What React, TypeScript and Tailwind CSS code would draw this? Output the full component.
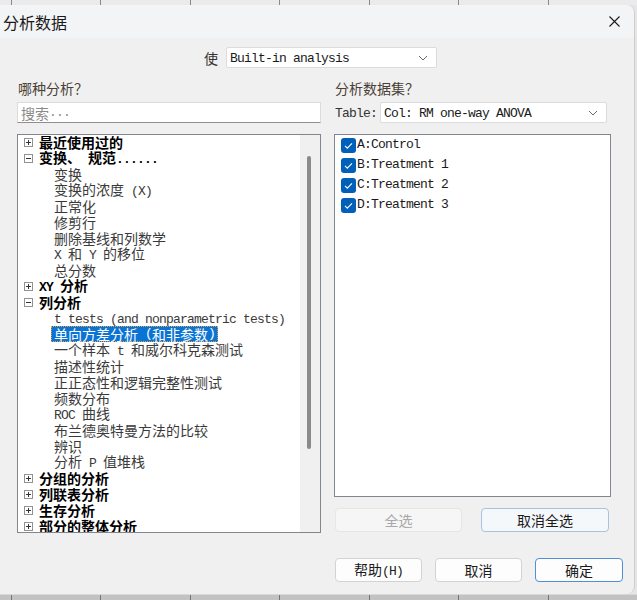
import React from 'react';

// ASCII runs in a narrow mono face, CJK runs in Noto — mimics NSimSun half/full widths
function T({ s }: { s: string }) {
  const parts = s.match(/[\x20-\x7e]+|[^\x20-\x7e]+/g) || [];
  return (
    <>
      {parts.map((p, i) =>
        /^[\x20-\x7e]/.test(p) ? (
          <span key={i} className="font-['Liberation_Mono'] text-[13px] tracking-[-0.8px]">{p}</span>
        ) : (
          <span key={i}>{p}</span>
        )
      )}
    </>
  );
}

function Chevron() {
  return (
    <svg width="10" height="6" viewBox="0 0 10 6" fill="none">
      <path d="M1 1l4 4 4-4" stroke="#6a6a6a" strokeWidth="1" />
    </svg>
  );
}

function Combo({ value, width }: { value: string; width: string }) {
  return (
    <div className={`${width} h-[21px] bg-white border border-[#dcdcdc] rounded-[2px] flex items-center justify-between pl-[3px] pr-[8px] text-[#1a1a1a] whitespace-pre`}>
      <span><T s={value} /></span>
      <Chevron />
    </div>
  );
}

function Expander({ open }: { open: boolean }) {
  return (
    <svg width="9" height="9" viewBox="0 0 9 9" className="shrink-0">
      <rect x="0.5" y="0.5" width="8" height="8" fill="white" stroke="#919191" />
      <path d="M2 4.5h5" stroke="#333" />
      {!open && <path d="M4.5 2v5" stroke="#333" />}
    </svg>
  );
}

const tree: { text: string; level: number; open?: boolean; selected?: boolean }[] = [
  { text: '最近使用过的', level: 0, open: false },
  { text: '变换、 规范......', level: 0, open: true },
  { text: '变换', level: 1 },
  { text: '变换的浓度 (X)', level: 1 },
  { text: '正常化', level: 1 },
  { text: '修剪行', level: 1 },
  { text: '删除基线和列数学', level: 1 },
  { text: 'X 和 Y 的移位', level: 1 },
  { text: '总分数', level: 1 },
  { text: 'XY 分析', level: 0, open: false },
  { text: '列分析', level: 0, open: true },
  { text: 't tests (and nonparametric tests)', level: 1 },
  { text: '单向方差分析 (和非参数)', level: 1, selected: true },
  { text: '一个样本 t 和威尔科克森测试', level: 1 },
  { text: '描述性统计', level: 1 },
  { text: '正正态性和逻辑完整性测试', level: 1 },
  { text: '频数分布', level: 1 },
  { text: 'ROC 曲线', level: 1 },
  { text: '布兰德奥特曼方法的比较', level: 1 },
  { text: '辨识', level: 1 },
  { text: '分析 P 值堆栈', level: 1 },
  { text: '分组的分析', level: 0, open: false },
  { text: '列联表分析', level: 0, open: false },
  { text: '生存分析', level: 0, open: false },
  { text: '部分的整体分析', level: 0, open: false },
];

const datasets = ['A:Control', 'B:Treatment 1', 'C:Treatment 2', 'D:Treatment 3'];

export default function App() {
  return (
    <div className="w-[637px] h-[600px] overflow-hidden bg-[#e6e6e6] flex flex-col font-['Noto_Sans_CJK_SC',sans-serif] text-[14px] leading-[16px]">
      {/* sheet grid behind the dialog */}
      <div className="h-[5px] flex bg-[#ebebeb] shrink-0">
        <div className="w-[12px]" />
        {[0, 1, 2, 3, 4, 5, 6].map(i => (
          <div key={i} className="w-[99px] border-l border-[#8a8a8a]" />
        ))}
      </div>

      <div className="h-[589px] w-[635px] bg-[#f0f0f0] rounded-r-[8px] border-r border-[#cdcdcd] flex flex-col shrink-0">
        {/* title bar */}
        <div className="h-[33px] bg-[#f3f4f6] rounded-tr-[8px] flex items-center justify-between pl-[3px] pr-[14px]">
          <span className="text-[16px] leading-[20px] text-[#1a1a1a]">分析数据</span>
          <svg width="11" height="11" viewBox="0 0 11 11">
            <path d="M0.5 0.5l10 10M10.5 0.5l-10 10" stroke="#1a1a1a" strokeWidth="1.1" />
          </svg>
        </div>

        <div className="mt-[9px] h-[21px] flex items-center pl-[204px]">
          <span className="text-[#333] mr-[8px]">使</span>
          <Combo value="Built-in analysis" width="w-[211px]" />
        </div>

        <div className="flex pl-[17px] gap-[13px] mt-[12px]">
          {/* left column */}
          <div className="w-[304px] flex flex-col">
            <div className="h-[16px] pl-[1px] text-[#4a4035]">哪种分析？</div>
            <div className="mt-[6px] h-[21px] bg-white border border-[#dcdcdc] border-b-[#8f8f8f] flex items-center pl-[3px] text-[#8a8a8a]">
              <T s="搜索..." />
            </div>
            <div className="mt-[11px] h-[399px] bg-white border border-[#82878f] flex overflow-hidden">
              <div className="flex-1 pl-[6px] -mt-[1px] whitespace-pre">
                {tree.map((r, i) =>
                  r.level === 0 ? (
                    <div key={i} className="h-[16px] flex items-center gap-[6px] font-bold text-black">
                      <Expander open={!!r.open} />
                      <span><T s={r.text} /></span>
                    </div>
                  ) : (
                    <div key={i} className="h-[16px] flex items-center pl-[30px] text-[#3a3a3a]">
                      {r.selected ? (
                        <span className="-ml-[3px] pl-[2px] pr-[2px] h-[16px] flex items-center bg-[#0a74d6] text-white border border-dotted border-[#e8a040]">
                          <T s={r.text} />
                        </span>
                      ) : (
                        <span><T s={r.text} /></span>
                      )}
                    </div>
                  )
                )}
              </div>
              <div className="w-[20px] bg-[#f0f0f0] pl-[7px] pt-[21px]">
                <div className="w-[4px] h-[293px] rounded-full bg-[#8a8a8a]" />
              </div>
            </div>
          </div>

          {/* right column */}
          <div className="w-[277px] flex flex-col">
            <div className="h-[16px] pl-[1px] text-[#4a4035]">分析数据集？</div>
            <div className="mt-[6px] h-[21px] flex items-center pl-[1px] gap-[3px] whitespace-pre">
              <span className="text-[#333]"><T s="Table:" /></span>
              <Combo value="Col: RM one-way ANOVA" width="w-[227px]" />
            </div>
            <div className="mt-[11px] h-[363px] bg-white border border-[#82878f] pl-[6px]">
              {datasets.map(d => (
                <div key={d} className="h-[20px] flex items-center gap-[1px] text-[#1a1a1a] whitespace-pre">
                  <span className="w-[15px] h-[15px] rounded-[3px] bg-[#005fb8] flex items-center justify-center">
                    <svg width="11" height="11" viewBox="0 0 11 11" fill="none">
                      <path d="M2 5.8l2.3 2.3L9 3.3" stroke="white" strokeWidth="1.1" />
                    </svg>
                  </span>
                  <T s={d} />
                </div>
              ))}
            </div>
            <div className="mt-[11px] flex gap-[19px] pl-[1px]">
              <button className="w-[127px] h-[24px] rounded-[4px] bg-[#f6f6f6] border border-[#e6e6e6] text-[#a8a8a8]">全选</button>
              <button className="w-[128px] h-[24px] rounded-[4px] bg-[#f5f8fb] border border-[#a9c3de] text-[#1b1b1b]">取消全选</button>
            </div>
          </div>
        </div>

        <div className="mt-[25px] flex gap-[13px] pl-[335px]">
          <button className="w-[87px] h-[24px] rounded-[4px] bg-[#fdfdfd] border border-[#d3d3d3] text-[#1b1b1b] whitespace-pre">
            <T s="帮助(H)" />
          </button>
          <button className="w-[87px] h-[24px] rounded-[4px] bg-[#fdfdfd] border border-[#d3d3d3] text-[#1b1b1b]">取消</button>
          <button className="w-[88px] h-[24px] rounded-[4px] bg-[#fdfdfd] border border-[#4f90d2] text-[#1b1b1b]">确定</button>
        </div>
      </div>

      <div className="h-[6px] flex bg-[#c2c2c2] border-t border-[#d8d8d8] shrink-0">
        <div className="w-[12px]" />
        {[0, 1, 2, 3, 4, 5, 6].map(i => (
          <div key={i} className="w-[99px] border-l border-[#747474]" />
        ))}
      </div>
    </div>
  );
}
